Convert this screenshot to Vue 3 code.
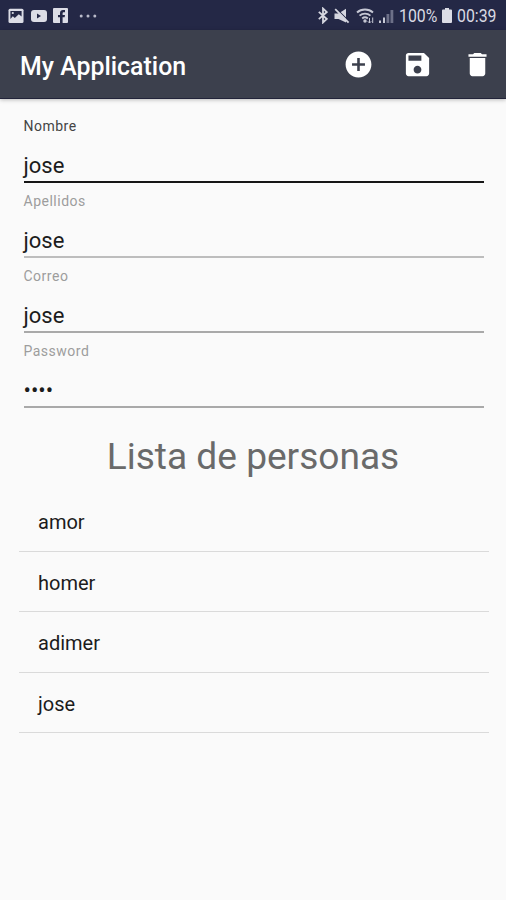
<script setup>
import { ref } from 'vue'

const fields = ref([
  { label: 'Nombre', value: 'jose', active: true },
  { label: 'Apellidos', value: 'jose', light: true },
  { label: 'Correo', value: 'jose' },
  { label: 'Password', value: '••••' },
])
const people = ref(['amor', 'homer', 'adimer', 'jose'])
</script>

<template>
  <div class="screen">
    <header class="status">
      <div class="notices">
        <svg width="16" height="16" viewBox="0 0 16 16">
          <rect x="0.5" y="0.8" width="15" height="14.2" rx="1.5" fill="#dcdde6" />
          <path d="M2.4 3h11.2v5.5l-2.8-2.2-4 3.6-2-1.6-2.4 2.6z" fill="#242846" />
          <circle cx="4.8" cy="5" r="1.1" fill="#dcdde6" />
        </svg>
        <svg width="16" height="12" viewBox="0 0 16 12">
          <rect width="16" height="12" rx="3" fill="#dcdde6" />
          <path d="M6 3.5v5L10 6z" fill="#242846" />
        </svg>
        <svg class="facebook" width="15" height="15" viewBox="0 0 15 15">
          <rect width="15" height="15" rx="1" fill="#dcdde6" />
          <path d="M7 15V9.3H5V7h2V5.2C7 3.2 8.2 2 10.1 2H12v2.3h-1.2c-.9 0-1.2.4-1.2 1.1V7H12l-.4 2.3h-2V15z" fill="#242846" />
        </svg>
        <svg class="more" width="18" height="4" viewBox="0 0 18 4" fill="#b9bbca">
          <circle cx="2.2" cy="2" r="1.5" />
          <circle cx="9" cy="2" r="1.5" />
          <circle cx="15.8" cy="2" r="1.5" />
        </svg>
      </div>
      <div class="system">
        <svg width="10" height="17" viewBox="0 0 10 17" fill="none" stroke="#d5d6df" stroke-width="1.8">
          <path d="M.8 4.8l8 7.2L5 15.5v-14L8.8 5l-8 7.2" />
        </svg>
        <svg class="mute" width="16" height="16" viewBox="0 0 16 16">
          <path d="M0.500 5.500h4L12 .8v13.700L4.500 11h-4z" fill="#d5d6df" />
          <path d="M2.600 .8l12.600 12.600" stroke="#242846" stroke-width="1.200" />
          <path d="M1.200 1.200l13.400 13.400" stroke="#d5d6df" stroke-width="1.800" />
        </svg>
        <svg class="wifi" width="19" height="16" viewBox="0 0 19 16" fill="none" stroke="#c6c8d4" stroke-width="1.9">
          <path d="M1 4.5c4.4-4 11.6-4 16 0" />
          <path d="M3.6 7.6c3-2.7 7.8-2.7 10.8 0" />
          <path d="M6.2 10.5c1.6-1.4 4-1.4 5.6 0" />
          <circle cx="9" cy="13" r=".8" fill="#c6c8d4" />
          <path d="M13.5 10v5m-1.7-1.7l1.7 1.7 1.7-1.7M16.7 15V9.5" stroke-width="1" />
        </svg>
        <svg class="signal" width="15" height="14" viewBox="0 0 15 14">
          <path d="M0 11.5h2V14H0zM4 8.5h2V14H4z" fill="#c6c8d4" />
          <path d="M7.5 5h2.8v9H7.5zM11.5 1h2.8v13h-2.8z" fill="#6d7088" />
        </svg>
        <span class="percent">100%</span>
        <svg class="battery" width="10" height="15" viewBox="0 0 10 15" fill="#dcdde6">
          <path d="M3 0h4v1.6h2a1 1 0 0 1 1 1V14a1 1 0 0 1-1 1H1a1 1 0 0 1-1-1V2.6a1 1 0 0 1 1-1h2z" />
        </svg>
        <span class="clock">00:39</span>
      </div>
    </header>

    <nav class="bar">
      <h1>My Application</h1>
      <div class="actions">
        <svg width="31" height="31" viewBox="0 0 24 24" fill="#fff">
          <path d="M12 2C6.48 2 2 6.48 2 12s4.48 10 10 10 10-4.48 10-10S17.52 2 12 2zm5 11h-4v4h-2v-4H7v-2h4V7h2v4h4v2z" />
        </svg>
        <svg width="31" height="31" viewBox="0 0 24 24" fill="#fff">
          <path d="M17 3H5c-1.11 0-2 .9-2 2v14c0 1.1.89 2 2 2h14c1.1 0 2-.9 2-2V7l-4-4zm-5 16c-1.66 0-3-1.34-3-3s1.34-3 3-3 3 1.34 3 3-1.34 3-3 3zm3-10H5V5h10v4z" />
        </svg>
        <svg width="31" height="31" viewBox="0 0 24 24" fill="#fff">
          <path d="M6 19c0 1.1.9 2 2 2h8c1.1 0 2-.9 2-2V7H6v12zM19 4h-3.5l-1-1h-5l-1 1H5v2h14V4z" />
        </svg>
      </div>
    </nav>

    <main>
      <form class="form">
        <div
          v-for="field in fields"
          :key="field.label"
          class="field"
          :class="{ active: field.active, light: field.light }"
        >
          <label>{{ field.label }}</label>
          <div class="value">{{ field.value }}</div>
        </div>
      </form>
      <h2>Lista de personas</h2>
      <ul>
        <li v-for="person in people" :key="person">{{ person }}</li>
      </ul>
    </main>
  </div>
</template>

<style>
body {
  background: #fafafa;
}
</style>

<style scoped>
.screen {
  width: 506px;
  height: 900px;
  overflow: hidden;
  background: #fafafa;
  font-family: Roboto, sans-serif;
  color: #1c1c1c;
}
.status {
  box-sizing: border-box;
  height: 30px;
  padding: 1px 9px 0 8px;
  display: flex;
  justify-content: space-between;
  background: #242846;
  color: #d9dae3;
}
.notices,
.system {
  display: flex;
  align-items: center;
}
.notices {
  gap: 6.5px;
}
.more {
  margin-left: 4.5px;
}
.mute,
.wifi {
  margin-left: 6px;
}
.signal {
  margin-left: 4px;
}
.percent,
.clock {
  font-size: 18px;
  line-height: 30px;
  white-space: nowrap;
  transform: scaleX(0.88);
  transform-origin: 0 50%;
}
.percent {
  width: 38px;
  margin-left: 5px;
}
.battery {
  margin-left: 5px;
}
.clock {
  width: 40px;
  margin-left: 5px;
}
.bar {
  box-sizing: border-box;
  position: relative;
  height: 69px;
  padding: 0 13.5px 0 20px;
  display: flex;
  align-items: center;
  justify-content: space-between;
  background: #3c404d;
  border-bottom: 1px solid #22243a;
  box-shadow: 0 1px 4px rgba(0, 0, 0, 0.25);
}
h1 {
  margin: 5px 0 0;
  font-size: 24.9px;
  line-height: 30px;
  font-weight: 500;
  color: #fff;
}
.actions {
  display: flex;
  gap: 28.5px;
}
.form {
  padding: 17px 22px 0 23.5px;
}
.field {
  box-sizing: border-box;
  height: 75px;
}
label {
  display: block;
  font-size: 14px;
  line-height: 20px;
  letter-spacing: 0.5px;
  color: #9d9d9d;
}
.value {
  box-sizing: border-box;
  height: 47px;
  padding-top: 16px;
  font-size: 22px;
  line-height: 28px;
  border-bottom: 2px solid #a9a9a9;
}
.light .value {
  border-bottom-color: #bdbdbd;
}
.active label {
  color: #444;
}
.active .value {
  border-bottom-color: #161616;
}
h2 {
  margin: 19px 0 0;
  text-align: center;
  font-size: 37.1px;
  line-height: 44px;
  font-weight: 400;
  color: #6a6a6a;
}
ul {
  margin: 12.4px 17px 0 19px;
  padding: 0;
  list-style: none;
}
li {
  box-sizing: border-box;
  height: 60.4px;
  padding-left: 19px;
  font-size: 20px;
  line-height: 62px;
  border-bottom: 1px solid #dadada;
}
</style>
